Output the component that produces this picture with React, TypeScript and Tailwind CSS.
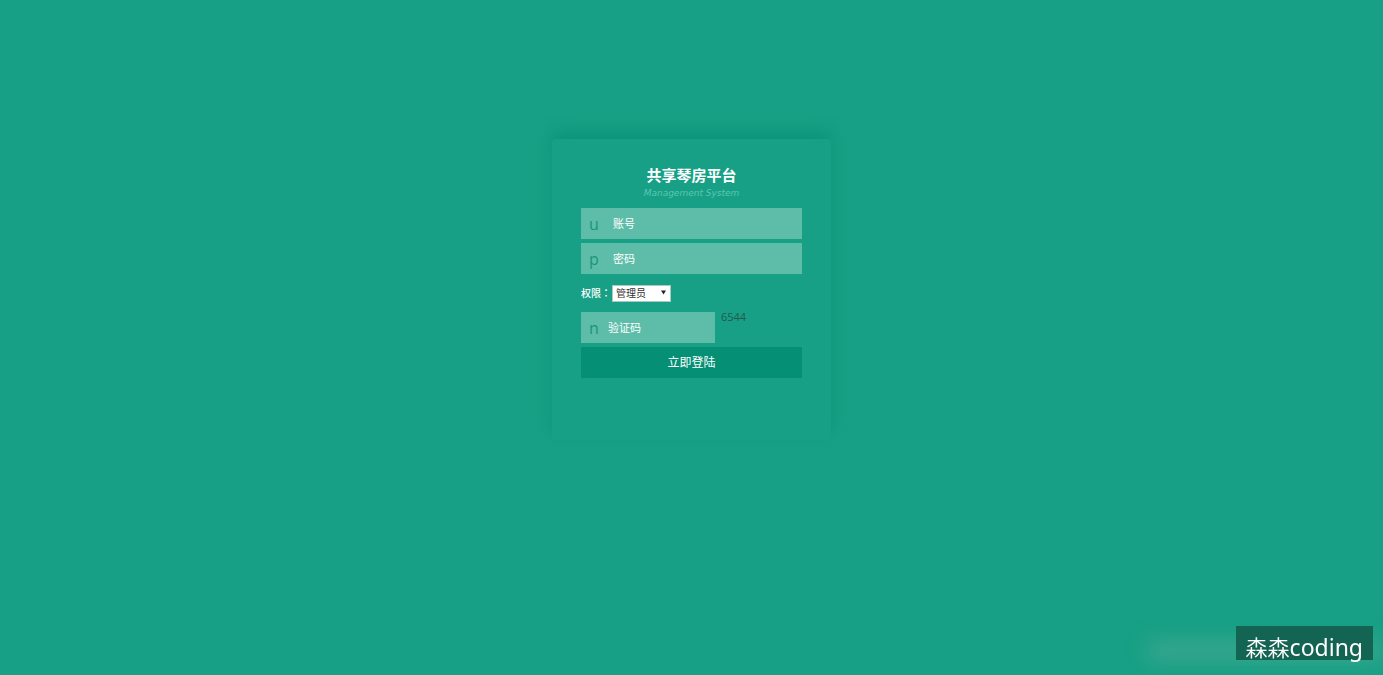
import type { ReactNode } from "react";

type FieldProps = {
  id: string;
  glyph: string;
  label: string;
  type?: string;
  width?: string;
  inset?: string;
};

function Field({ id, glyph, label, type = "text", width = "w-full", inset = "pl-8" }: FieldProps) {
  return (
    <div className={`relative h-[31px] ${width}`}>
      <label
        htmlFor={id}
        aria-label={label}
        className="pointer-events-none absolute inset-y-0 left-2 flex items-center text-base leading-4 text-[#17967a]"
      >
        {glyph}
      </label>
      <input
        id={id}
        type={type}
        placeholder={label}
        className={`block h-full w-full bg-[#5dbda9] pr-2 text-[11px] text-white outline-none placeholder:text-white placeholder:opacity-100 ${inset}`}
      />
    </div>
  );
}

function Card({ children }: { children: ReactNode }) {
  return (
    <main className="mx-auto mt-[139px] w-[279px] rounded-sm bg-[#17a085] px-[29px] pt-[27px] pb-[62px] shadow-[0_-8px_16px_#0d947a]">
      {children}
    </main>
  );
}

export default function App() {
  return (
    <div className="flow-root min-h-screen bg-[#17a085] font-['Open_Sans','Noto_Sans_CJK_SC',sans-serif]">
      <Card>
        <header className="text-center">
          <h1 className="text-[15px] leading-[18px] font-bold text-white">共享琴房平台</h1>
          <p className="font-['DejaVu_Sans',sans-serif] text-[9px] leading-[18px] text-[#5cc6b0] italic">
            Management System
          </p>
        </header>
        <form className="mt-[6px] flex flex-col gap-1" onSubmit={(e) => e.preventDefault()}>
          <Field id="account" glyph="u" label="账号" />
          <Field id="password" glyph="p" label="密码" type="password" />
          <div className="my-[5px] flex h-5 items-center text-[11px] text-white">
            <label htmlFor="role" className="w-[31px] text-[10px] font-medium whitespace-nowrap">
              权限<span className="font-['Noto_Sans_CJK_TC',sans-serif]" lang="zh-TW">：</span>
            </label>
            <div className="relative">
              <select
                id="role"
                className="block h-[17px] w-[59px] appearance-none border border-[#a9c9c1] bg-white pl-[3px] text-[10px] leading-[15px] text-[#333] outline-none"
              >
                <option>管理员</option>
                <option>用户</option>
              </select>
              <svg viewBox="0 0 6 5" className="pointer-events-none absolute top-[5px] right-[5px] h-[5px] w-[5px]" aria-hidden="true">
                <path d="M0 0H6L3 5Z" fill="#222" />
              </svg>
            </div>
          </div>
          <div className="flex gap-[6px]">
            <Field id="captcha" glyph="n" label="验证码" width="w-[134px]" inset="pl-[27px]" />
            <output htmlFor="captcha" className="text-[11px] leading-[10px] text-[#23594f]">
              6544
            </output>
          </div>
          <button type="submit" className="h-[31px] w-full bg-[#058f75] text-xs text-white">
            立即登陆
          </button>
        </form>
      </Card>
      <div className="fixed right-0 bottom-0 pr-[10px] pb-[15px]">
        <div className="absolute right-0 bottom-3 h-6 w-[236px] bg-[#43a891] opacity-70 blur-[10px]" />
        <div className="relative h-[34px] bg-[#146453] px-[10px] pt-[5px] font-['Noto_Sans','Noto_Sans_CJK_SC',sans-serif] text-[22px] leading-8 font-[350] text-white">
          森森<span className="text-[23px] font-normal">coding</span>
        </div>
      </div>
    </div>
  );
}
